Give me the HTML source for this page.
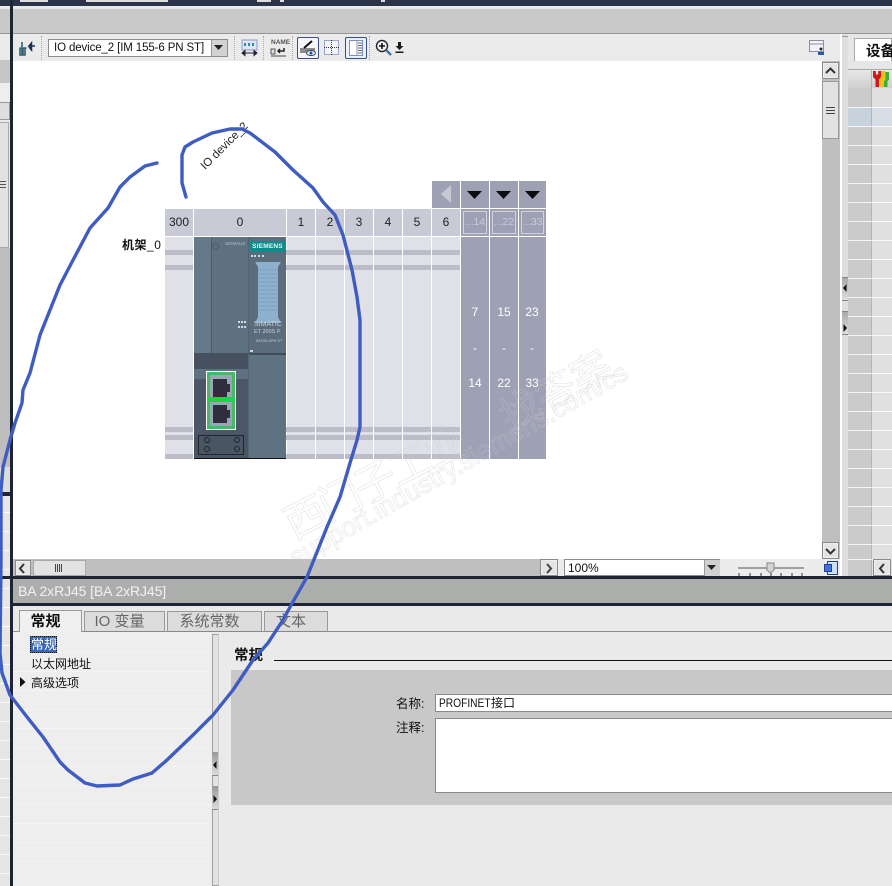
<!DOCTYPE html>
<html><head><meta charset="utf-8"><style>
html,body{margin:0;padding:0;background:#fff}
#p{position:relative;width:892px;height:886px;overflow:hidden;font-family:"Liberation Sans","Noto Sans CJK SC",sans-serif;font-size:12px;color:#111;background:#eaeaea}
#p div,#p span{position:absolute;box-sizing:border-box}
.c{text-align:center;white-space:nowrap}
.hd{top:209px;height:27px;background:#c8cad6;line-height:27px;text-align:center;color:#222;font-size:12px}
.bd{top:237px;height:222px;background:#dfe0e8}
.st{height:5px;background:#bcbdc9}
.dk{background:#9ea1b4}
.w{color:#fff;text-align:center;width:28px}
.tab{top:611px;height:21px;background:#dcdcdc;border:1px solid #999;border-bottom:1px solid #888;text-align:center;font-size:15px;line-height:19px;color:#666;padding-right:10px;white-space:nowrap}
.sep{width:1px;top:36px;height:24px;border-left:1px dotted #aaa}
.btn{background:#e4e4e4;border:1px solid #8a8a8a;outline:1px solid #eee;outline-offset:-2px}
.row{left:848px;width:44px;height:1px;background:rgba(255,255,255,.8)}
.lrow{left:0;width:10px;height:1px;background:rgba(255,255,255,.8)}
.nrow{left:13px;width:199px;height:1px;background:#f4f4f4}
.wm{color:transparent;-webkit-text-stroke:.7px rgba(200,200,210,.45);white-space:nowrap;transform-origin:0 0}
svg{position:absolute}
</style></head><body><div id="p">

<!-- top -->
<div style="left:0;top:0;width:892px;height:6px;background:#2b334b"></div>
<div style="left:20px;top:0;width:28px;height:2px;background:#ddd"></div>
<div style="left:86px;top:0;width:82px;height:2px;background:#ddd"></div>
<div style="left:257px;top:0;width:14px;height:2px;background:#ddd"></div>
<div style="left:280px;top:0;width:4px;height:2px;background:#ddd"></div>
<div style="left:381px;top:0;width:4px;height:2px;background:#ddd"></div>
<div style="left:0;top:6px;width:892px;height:3px;background:#e9e9e9"></div>
<div style="left:0;top:9px;width:892px;height:24px;background:#c9c9c9"></div>
<div style="left:0;top:33px;width:892px;height:1px;background:#969696"></div>
<div style="left:13px;top:34px;width:829px;height:27px;background:#ebebeb"></div>

<!-- left sliver -->
<div style="left:0;top:34px;width:10px;height:26px;background:#ebebeb"></div>
<div style="left:0;top:60px;width:10px;height:23px;background:#c6c6c6"></div>
<div style="left:0;top:83px;width:10px;height:18px;background:#eeeeee"></div>
<div style="left:0;top:102px;width:10px;height:18px;background:#dedede;border:1px solid #999;border-left:0"></div>
<div style="left:0;top:122px;width:9px;height:126px;background:#e2e2e2;border:1px solid #aaa;border-left:0"></div>
<div style="left:0;top:181px;width:6px;height:1px;background:#555"></div>
<div style="left:0;top:184px;width:6px;height:1px;background:#555"></div>
<div style="left:0;top:187px;width:6px;height:1px;background:#555"></div>
<div style="left:0;top:248px;width:10px;height:219px;background:#bebebe"></div>
<div style="left:0;top:467px;width:10px;height:25px;background:#dcdcdc"></div>
<div style="left:0;top:492px;width:10px;height:4px;background:#1f2434"></div>
<div style="left:0;top:496px;width:10px;height:390px;background:#e6e6e6"></div>
<div class="lrow" style="top:512px"></div><div class="lrow" style="top:531px"></div><div class="lrow" style="top:550px"></div><div class="lrow" style="top:569px"></div><div class="lrow" style="top:588px"></div><div class="lrow" style="top:607px"></div><div class="lrow" style="top:626px"></div><div class="lrow" style="top:645px"></div><div class="lrow" style="top:664px"></div><div class="lrow" style="top:683px"></div><div class="lrow" style="top:702px"></div><div class="lrow" style="top:721px"></div><div class="lrow" style="top:740px"></div><div class="lrow" style="top:759px"></div><div class="lrow" style="top:778px"></div><div class="lrow" style="top:797px"></div><div class="lrow" style="top:816px"></div><div class="lrow" style="top:835px"></div><div class="lrow" style="top:854px"></div><div class="lrow" style="top:873px"></div>

<!-- toolbar -->
<svg style="left:18px;top:38px" width="20" height="20" viewBox="0 0 20 20"><path d="M4 4v5M1.500 10h7M2 10v7h2v-7M5 10v7h2v-7" fill="none" stroke="#2f5d6e" stroke-width="1.600"/><path d="M17 8h-6l2.500-3v7l-2.500-3" fill="#1b2f55" stroke="#1b2f55" stroke-width="1.500"/></svg>
<div class="sep" style="left:41px"></div>
<div style="left:48px;top:39px;width:180px;height:18px;background:#fff;border:1px solid #8c8c8c;font-size:11.500px;line-height:16px;padding-left:5px;white-space:nowrap;letter-spacing:-.12px;overflow:hidden">IO device_2 [IM 155-6 PN ST]</div>
<div style="left:211px;top:40px;width:16px;height:16px;background:#d2d2d2;border-left:1px solid #999"></div>
<svg style="left:214px;top:45px" width="10" height="6"><path d="M0 0h9L4.500 5z" fill="#222"/></svg>
<div class="sep" style="left:234px"></div>
<svg style="left:241px;top:39px" width="18" height="18" viewBox="0 0 18 18"><rect x="1" y="1" width="15" height="10" fill="#dfe5f4" stroke="#8a9cc8"/><path d="M4 4v3M8 4v3M12 4v3" stroke="#2d8ca0" stroke-width="2"/><path d="M1 14h15M1 14l3-2.500v5zM16 14l-3-2.500v5z" fill="#223" stroke="#223"/></svg>
<div class="sep" style="left:263px"></div>
<svg style="left:270px;top:39px" width="18" height="18" viewBox="0 0 18 18"><rect x="1" y="10" width="4" height="5" fill="#ddd" stroke="#555"/><path d="M14 9v3H8M10 10l-2 2 2 2" stroke="#222" stroke-width="1.500" fill="none"/><path d="M1 17h15" stroke="#999" stroke-width="2"/></svg>
<span style="left:271px;top:39px;font-size:6.500px;font-weight:bold;color:#555;line-height:8px">NAME</span>
<div class="sep" style="left:292px"></div>
<div style="left:297px;top:37px;width:22px;height:22px;background:#f4f6fb;border:1px solid #3b4f80;border-radius:2px"></div>
<svg style="left:299px;top:39px" width="18" height="18" viewBox="0 0 18 18"><path d="M1 9h15v5H1z" fill="#8b8b8b"/><path d="M5 9l8-7" stroke="#111" stroke-width="2"/><ellipse cx="12" cy="14" rx="4.500" ry="2.500" fill="#e8eefc" stroke="#345"/><circle cx="12" cy="14" r="1.500" fill="#1d4fa8"/></svg>
<svg style="left:323px;top:39px" width="18" height="18" viewBox="0 0 18 18"><rect x="1.500" y="1.500" width="14" height="14" fill="#f4f4fa" stroke="#9aa6c8"/><path d="M1 8.500h16M8.500 1v16" stroke="#333" stroke-dasharray="1 1"/></svg>
<div style="left:345px;top:37px;width:22px;height:22px;background:#eaf0fa;border:1px solid #3b4f80;border-radius:2px"></div>
<svg style="left:347px;top:39px" width="18" height="18" viewBox="0 0 18 18"><rect x="2.500" y="1.500" width="13" height="15" fill="#fff" stroke="#7f90b8"/><path d="M10 2v14" stroke="#7f90b8"/><path d="M11 4h4M11 6.500h4M11 9h4M11 11.500h4M11 14h4" stroke="#666"/></svg>
<div class="sep" style="left:369px"></div>
<svg style="left:375px;top:39px" width="18" height="18" viewBox="0 0 18 18"><circle cx="7" cy="7" r="5.500" fill="#f6f6f6" stroke="#223" stroke-width="1.400"/><path d="M4 7h6M7 4v6" stroke="#111" stroke-width="1.600"/><path d="M11 11l5 5" stroke="#4a6fa8" stroke-width="2.400"/></svg>
<svg style="left:395px;top:42px" width="9" height="12" viewBox="0 0 9 12"><path d="M3 0h3v4h2.500L4.500 8 .5 4H3zM0.500 9.500h8v1.500h-8z" fill="#1a1a1a"/></svg>
<svg style="left:809px;top:40px" width="16" height="16" viewBox="0 0 16 16"><rect x=".5" y=".5" width="14" height="11" fill="#f2f2f8" stroke="#8c8ca8"/><path d="M1 4h13" stroke="#8c8ca8"/><circle cx="12" cy="9" r="1.500" fill="#223"/><path d="M9 15v-3h6v3z" fill="#1f5fa8"/></svg>

<!-- canvas -->
<div style="left:13px;top:61px;width:809px;height:498px;background:#fff"></div>

<!-- rack -->
<div style="left:432px;top:181px;width:28px;height:27px;background:#9ea1b4"></div>
<svg style="left:440px;top:185px" width="12" height="19"><path d="M11 0v18L1 9z" fill="#c6c8d4"/></svg>
<div class="dk" style="left:461px;top:181px;width:28px;height:27px"></div>
<div class="dk" style="left:490px;top:181px;width:28px;height:27px"></div>
<div class="dk" style="left:519px;top:181px;width:27px;height:27px"></div>
<svg style="left:461px;top:181px" width="86" height="27"><path d="M6 10h15l-7.500 8zM35 10h15l-7.500 8zM64 10h15l-7.500 8z" fill="#0c0c0c"/></svg>

<div class="hd" style="left:165px;width:28px">300</div>
<div class="hd" style="left:194px;width:92px">0</div>
<div class="hd" style="left:287px;width:28px">1</div>
<div class="hd" style="left:316px;width:28px">2</div>
<div class="hd" style="left:345px;width:28px">3</div>
<div class="hd" style="left:374px;width:28px">4</div>
<div class="hd" style="left:403px;width:28px">5</div>
<div class="hd" style="left:432px;width:28px">6</div>
<div class="hd dk" style="left:461px;width:28px;padding:2px;line-height:21px;color:#c9cbd8;font-size:10.500px;letter-spacing:-.2px"><span style="position:static;display:block;border:1px solid #d2d3de;height:23px;overflow:hidden">...14</span></div>
<div class="hd dk" style="left:490px;width:28px;padding:2px;line-height:21px;color:#c9cbd8;font-size:10.500px;letter-spacing:-.2px"><span style="position:static;display:block;border:1px solid #d2d3de;height:23px;overflow:hidden">...22</span></div>
<div class="hd dk" style="left:519px;width:27px;padding:2px;line-height:21px;color:#c9cbd8;font-size:10.500px;letter-spacing:-.2px"><span style="position:static;display:block;border:1px solid #d2d3de;height:23px;overflow:hidden">...33</span></div>

<div class="bd" style="left:165px;width:28px"></div>
<div class="bd" style="left:287px;width:28px"></div>
<div class="bd" style="left:316px;width:28px"></div>
<div class="bd" style="left:345px;width:28px"></div>
<div class="bd" style="left:374px;width:28px"></div>
<div class="bd" style="left:403px;width:28px"></div>
<div class="bd" style="left:432px;width:28px"></div>
<div class="bd dk" style="left:461px;width:28px"></div>
<div class="bd dk" style="left:490px;width:28px"></div>
<div class="bd dk" style="left:519px;width:27px"></div>

<div class="st" style="left:165px;top:250px;width:295px"></div>
<div class="st" style="left:165px;top:265px;width:295px"></div>
<div class="st" style="left:165px;top:427px;width:295px"></div>
<div class="st" style="left:165px;top:435px;width:295px"></div>
<div class="st" style="left:165px;top:454px;width:295px"></div>
<div style="left:193px;top:237px;width:1px;height:222px;background:#fff"></div>
<div style="left:315px;top:237px;width:1px;height:222px;background:#fff"></div>
<div style="left:344px;top:237px;width:1px;height:222px;background:#fff"></div>
<div style="left:373px;top:237px;width:1px;height:222px;background:#fff"></div>
<div style="left:402px;top:237px;width:1px;height:222px;background:#fff"></div>
<div style="left:431px;top:237px;width:1px;height:222px;background:#fff"></div>

<span class="w" style="left:461px;top:305px">7</span><span class="w" style="left:490px;top:305px">15</span><span class="w" style="left:518px;top:305px">23</span>
<span class="w" style="left:461px;top:341px">-</span><span class="w" style="left:490px;top:341px">-</span><span class="w" style="left:518px;top:341px">-</span>
<span class="w" style="left:461px;top:376px">14</span><span class="w" style="left:490px;top:376px">22</span><span class="w" style="left:518px;top:376px">33</span>

<span style="left:122px;top:236px;font-size:12px;white-space:nowrap;color:#111;letter-spacing:.5px"><b style="font-weight:bold">机架</b>_0</span>
<span style="left:203px;top:162px;font-size:11.500px;white-space:nowrap;transform:rotate(-45deg);transform-origin:0 50%;color:#222">IO device_2</span>

<!-- module -->
<div style="left:194px;top:237px;width:92px;height:222px;background:#5f7282"></div>
<div style="left:194px;top:237px;width:17px;height:116px;background:#64798a"></div>
<div style="left:211px;top:237px;width:1px;height:116px;background:#4c5c6a"></div>
<div style="left:212px;top:237px;width:36px;height:116px;background:#5e7181"></div>
<div style="left:248px;top:237px;width:1px;height:222px;background:#55636f"></div>
<div style="left:249px;top:237px;width:37px;height:116px;background:#5b6d7d"></div>
<div style="left:212px;top:243px;width:7px;height:7px;border:1px solid #4d5e6c;border-radius:50%"></div>
<span style="left:225px;top:241px;font-size:4.500px;color:#b8c4cc;white-space:nowrap">SIGNAUX</span>
<div style="left:250px;top:241px;width:35px;height:11px;background:#108b8b;color:#e8f4f4;font-size:6.500px;font-weight:bold;line-height:11px;text-align:center;letter-spacing:.2px;overflow:hidden">SIEMENS</div>
<div style="left:251px;top:255px;width:13px;height:3px;border-top:2px dotted #d2d8dc"></div>
<svg style="left:254px;top:262px" width="28" height="62"><path d="M1 0h26l-3 5v50l3 6H1l3-6V5z" fill="#8db0cc"/><path d="M4 8h20M4 12h20M4 16h20M4 20h20M4 24h20M4 28h20M4 32h20M4 36h20M4 40h20M4 44h20M4 48h20" stroke="#7da2c0" stroke-width="1"/></svg>
<div style="left:238px;top:321px;width:8px;height:7px;border-top:2px dotted #d5dade;border-bottom:2px dotted #d5dade"></div>
<span style="left:254px;top:320px;font-size:7px;color:#c8d0d6;white-space:nowrap;line-height:9px">SIMATIC</span>
<span style="left:254px;top:329px;font-size:5.500px;color:#c8d0d6;white-space:nowrap;line-height:7px">ET 200S P</span>
<span style="left:256px;top:337px;font-size:4px;color:#c2cad0;white-space:nowrap;line-height:7px">IM155-6PN ST</span>
<div style="left:250px;top:350px;width:3px;height:2px;background:#cfd5da"></div>
<div style="left:249px;top:353px;width:37px;height:2px;background:#3e4b58"></div>
<div style="left:194px;top:353px;width:54px;height:16px;background:#46505f"></div>
<div style="left:194px;top:369px;width:54px;height:10px;background:#5e7181"></div>
<div style="left:194px;top:379px;width:54px;height:55px;background:#4b5666"></div>
<div style="left:194px;top:434px;width:54px;height:25px;background:#4a5564"></div>
<div style="left:198px;top:435px;width:46px;height:20px;border:1px solid #20262e"></div>
<div style="left:204px;top:437px;width:6px;height:6px;border:1px solid #20262e;border-radius:50%"></div>
<div style="left:204px;top:446px;width:6px;height:6px;border:1px solid #20262e;border-radius:50%"></div>
<div style="left:234px;top:437px;width:6px;height:6px;border:1px solid #20262e;border-radius:50%"></div>
<div style="left:234px;top:446px;width:6px;height:6px;border:1px solid #20262e;border-radius:50%"></div>
<div style="left:194px;top:458px;width:92px;height:1px;background:#111"></div>
<div style="left:206px;top:371px;width:30px;height:59px;background:#9aa6b4;border:1px solid #fff;outline:3px solid #47b865;outline-offset:-4px"></div>
<div style="left:208px;top:397px;width:26px;height:5px;background:#1fd24c"></div>
<svg style="left:213px;top:379px" width="18" height="44"><path d="M0 0h14v5h3v8h-3v5H0zM0 26h14v5h3v8h-3v5H0z" fill="#302d3c"/></svg>

<!-- vertical scrollbar -->
<div style="left:822px;top:61px;width:18px;height:498px;background:#bfbfbf"></div>
<div class="btn" style="left:822px;top:62px;width:17px;height:17px"></div>
<svg style="left:825px;top:67px" width="11" height="8"><path d="M1 6l4.500-4.500L10 6" fill="none" stroke="#333" stroke-width="2"/></svg>
<div style="left:822px;top:81px;width:17px;height:58px;background:#e2e2e2;border:1px solid #999"></div>
<div style="left:826px;top:107px;width:9px;height:1px;background:#444"></div>
<div style="left:826px;top:110px;width:9px;height:1px;background:#444"></div>
<div style="left:826px;top:113px;width:9px;height:1px;background:#444"></div>
<div class="btn" style="left:822px;top:542px;width:17px;height:17px"></div>
<svg style="left:825px;top:547px" width="11" height="8"><path d="M1 2l4.500 4.500L10 2" fill="none" stroke="#333" stroke-width="2"/></svg>

<!-- hscroll -->
<div style="left:13px;top:559px;width:527px;height:17px;background:#bfbfbf"></div>
<div style="left:540px;top:559px;width:300px;height:17px;background:#ececec"></div>
<div class="btn" style="left:15px;top:560px;width:16px;height:16px"></div>
<svg style="left:18px;top:563px" width="8" height="11"><path d="M6 1L2 5.500 6 10" fill="none" stroke="#333" stroke-width="2"/></svg>
<div style="left:33px;top:560px;width:53px;height:16px;background:#e2e2e2;border:1px solid #aaa"></div>
<div style="left:55px;top:564px;width:7px;height:8px;background:repeating-linear-gradient(90deg,#444 0,#444 1px,transparent 1px,transparent 2px)"></div>
<div class="btn" style="left:540px;top:559px;width:18px;height:17px"></div>
<svg style="left:545px;top:563px" width="8" height="11"><path d="M2 1l4 4.500L2 10" fill="none" stroke="#444" stroke-width="2"/></svg>
<div style="left:564px;top:559px;width:156px;height:17px;background:#fff;border:1px solid #8c8c8c;line-height:16px;padding-left:3px;font-size:12px">100%</div>
<div style="left:704px;top:560px;width:16px;height:16px;background:#d0d0d0;border-left:1px solid #999"></div>
<svg style="left:707px;top:565px" width="10" height="6"><path d="M0 0h9L4.500 5z" fill="#222"/></svg>
<svg style="left:736px;top:561px" width="70" height="15"><path d="M2 7h66" stroke="#555"/><path d="M3 12v3M14 12v3M25 12v3M45 12v3M56 12v3M66 12v3M35 12v3" stroke="#333"/><path d="M31 2h7v7l-3.500 3-3.500-3z" fill="#d4d4d4" stroke="#888"/></svg>
<svg style="left:824px;top:561px" width="15" height="15"><rect x="3.500" y=".5" width="10" height="13" fill="#cfe0fa" stroke="#1f3f8f"/><rect x=".5" y="3.500" width="7" height="7" fill="#3f6fe0" stroke="#1f3f8f"/></svg>

<!-- splitter -->
<div style="left:840px;top:34px;width:8px;height:542px;background:#dedede"></div>
<div style="left:840px;top:34px;width:2px;height:542px;background:#fff"></div>
<div style="left:842px;top:36px;width:6px;height:1px;background:#999"></div>
<div style="left:842px;top:277px;width:6px;height:24px;background:linear-gradient(#aaa,#ddd);border-top:1px solid #888;border-bottom:1px solid #888"></div>
<div style="left:842px;top:311px;width:6px;height:24px;background:linear-gradient(#aaa,#ddd);border-top:1px solid #888;border-bottom:1px solid #888"></div>
<svg style="left:843px;top:284px" width="5" height="48"><path d="M3.500 0v8L0 4zM.5 40v8L4 44z" fill="#111"/></svg>

<!-- right panel -->
<div style="left:848px;top:34px;width:44px;height:27px;background:#e6e6e6"></div>
<div style="left:848px;top:61px;width:44px;height:8px;background:#e6e6e6"></div>
<div style="left:854px;top:38px;width:38px;height:23px;background:#fff;border:1px solid #aaa;border-bottom:0"></div>
<span style="left:866px;top:40px;font-size:14.500px;font-weight:bold;white-space:nowrap;color:#111">设备</span>
<div style="left:848px;top:69px;width:44px;height:19px;background:linear-gradient(#e8e8e8,#cfcfcf);border-top:1px solid #aaa"></div>
<div style="left:848px;top:88px;width:23px;height:488px;background:#cbcbcb"></div>
<div style="left:871px;top:69px;width:1px;height:507px;background:#b4b4b4"></div>
<div style="left:872px;top:88px;width:20px;height:488px;background:#e0e0e0"></div>
<div style="left:848px;top:107px;width:23px;height:19px;background:#c8d2dc"></div>
<div style="left:872px;top:107px;width:20px;height:19px;background:#d6dde4"></div>
<div class="row" style="top:107px"></div><div class="row" style="top:126px"></div><div class="row" style="top:145px"></div><div class="row" style="top:164px"></div><div class="row" style="top:183px"></div><div class="row" style="top:202px"></div><div class="row" style="top:221px"></div><div class="row" style="top:240px"></div><div class="row" style="top:259px"></div><div class="row" style="top:278px"></div><div class="row" style="top:297px"></div><div class="row" style="top:316px"></div><div class="row" style="top:335px"></div><div class="row" style="top:354px"></div><div class="row" style="top:373px"></div><div class="row" style="top:392px"></div><div class="row" style="top:411px"></div><div class="row" style="top:430px"></div><div class="row" style="top:449px"></div><div class="row" style="top:468px"></div><div class="row" style="top:487px"></div><div class="row" style="top:506px"></div><div class="row" style="top:525px"></div><div class="row" style="top:544px"></div><div class="row" style="top:559px"></div>
<svg style="left:873px;top:71px;z-index:2" width="16" height="16" viewBox="0 0 16 16"><path d="M9 1h7v8l-1.500 1v6H9z" fill="#3fae3a"/><path d="M6 0h6.500v9l-1.500 1v6H7z" fill="#eac21a"/><path d="M0 0h2.800v3.500h2.400V0H8v6L6 8.500V16H2.500V8.500L0 6z" fill="#d0161c"/></svg>
<div class="btn" style="left:873px;top:559px;width:18px;height:17px"></div>
<svg style="left:878px;top:563px" width="8" height="11"><path d="M6 1L2 5.500 6 10" fill="none" stroke="#333" stroke-width="2"/></svg>

<!-- inspector -->
<div style="left:0;top:576px;width:892px;height:3px;background:#1f2434"></div>
<div style="left:12px;top:579px;width:880px;height:24px;background:#acaeac"></div>
<span style="left:18px;top:583px;font-size:14px;color:#f2f2f2;white-space:nowrap;letter-spacing:-.1px">BA 2xRJ45 [BA 2xRJ45]</span>
<div style="left:12px;top:603px;width:880px;height:3px;background:#1f2434"></div>
<div style="left:13px;top:606px;width:879px;height:280px;background:#eaeaea"></div>
<div style="left:13px;top:631px;width:879px;height:1px;background:#8f8f8f"></div>
<div class="tab" style="left:19px;top:610px;width:63px;height:23px;background:#f0f0f0;color:#111;font-weight:bold;border-bottom:0;line-height:21px">常规</div>
<div class="tab" style="left:84px;width:81px">IO 变量</div>
<div class="tab" style="left:167px;width:95px">系统常数</div>
<div class="tab" style="left:264px;width:64px">文本</div>

<!-- nav -->
<div style="left:13px;top:632px;width:199px;height:254px;background:#eeeeee"></div>
<div class="nrow" style="top:652px"></div><div class="nrow" style="top:671px"></div><div class="nrow" style="top:690px"></div><div class="nrow" style="top:709px"></div><div class="nrow" style="top:728px"></div><div class="nrow" style="top:747px"></div><div class="nrow" style="top:766px"></div><div class="nrow" style="top:785px"></div><div class="nrow" style="top:804px"></div><div class="nrow" style="top:823px"></div><div class="nrow" style="top:842px"></div><div class="nrow" style="top:861px"></div>
<div style="left:30px;top:636px;width:27px;height:17px;background:#3a6ab4;border:1px dotted #111;color:#fff;font-size:13px;line-height:15px;text-align:center;white-space:nowrap">常规</div>
<span style="left:31px;top:657px;font-size:12px;line-height:15px;white-space:nowrap">以太网地址</span>
<span style="left:31px;top:676px;font-size:12px;line-height:15px;white-space:nowrap">高级选项</span>
<svg style="left:20px;top:677px" width="6" height="10"><path d="M0 0v10l5.500-5z" fill="#111"/></svg>
<div style="left:212px;top:634px;width:7px;height:252px;background:#e2e2e2;border:1px solid #a0a0a0;border-right:1px solid #ccc"></div>
<div style="left:212px;top:752px;width:6px;height:24px;background:linear-gradient(#999,#ddd);border-bottom:1px solid #888"></div>
<div style="left:212px;top:786px;width:6px;height:24px;background:linear-gradient(#999,#ddd);border-bottom:1px solid #888"></div>
<svg style="left:213px;top:761px" width="5" height="45"><path d="M3.500 0v8L0 4zM.5 34v8L4 38z" fill="#111"/></svg>

<!-- properties -->
<span style="left:234px;top:644px;font-size:14.500px;font-weight:bold;white-space:nowrap;color:#111">常规</span>
<div style="left:274px;top:660px;width:618px;height:1px;background:#111"></div>
<div style="left:231px;top:670px;width:661px;height:135px;background:#c8c8c8"></div>
<span style="left:396px;top:693px;font-size:12.500px;white-space:nowrap">名称:</span>
<span style="left:396px;top:717px;font-size:12.500px;white-space:nowrap">注释:</span>
<div style="left:435px;top:694px;width:457px;height:18px;background:#fff;border:1px solid #8a8a8a;border-right:0;line-height:16px;padding-left:3px;font-size:12px;white-space:nowrap"><span style="position:static;display:inline-block;width:52px;transform:scaleX(.85);transform-origin:0 50%">PROFINET</span><span style="position:static">接口</span></div>
<div style="left:435px;top:718px;width:457px;height:75px;background:#fff;border:1px solid #8a8a8a;border-right:0"></div>

<!-- dark vertical line -->
<div style="left:10px;top:0;width:3px;height:886px;background:#1f2434"></div>

<!-- watermark -->
<span class="wm" style="left:272px;top:497px;font-size:42px;transform:rotate(-27deg);letter-spacing:-3px">西门子工业</span>
<span class="wm" style="left:488px;top:392px;font-size:40px;transform:rotate(-29deg)">找答案</span>
<span class="wm" style="left:284px;top:546px;font-size:26.500px;transform:rotate(-29.500deg)">support.industry.siemens.com/cs</span>

<!-- hand-drawn loop -->
<svg style="left:0;top:0" width="892" height="886" viewBox="0 0 892 886"><path d="M157 163L145 166 130 177 120 187 108 208 90 228 72 262 60 285 48 315 40 335 30 373 23 390 22 403 15 423 10 440 3 467 1 490 1 560 0 653 2 673 10 695 27 717 43 737 60 762 68 770 85 783 97 786 120 785 133 779 152 773 167 760 193 735 213 715 233 690 253 660 268 643 283 620 290 607 307 577 317 552 327 527 340 497 350 463 357 440 360 427 360 320 357 297 352 270 343 235 335 215 323 202 313 188 293 170 275 152 250 133 242 129 230 129 212 133 193 142 185 147 182 155 182 183 186 197" fill="none" stroke="#3f5cc2" stroke-width="3.400" stroke-linejoin="round" stroke-linecap="round"/></svg>
</div></body></html>
